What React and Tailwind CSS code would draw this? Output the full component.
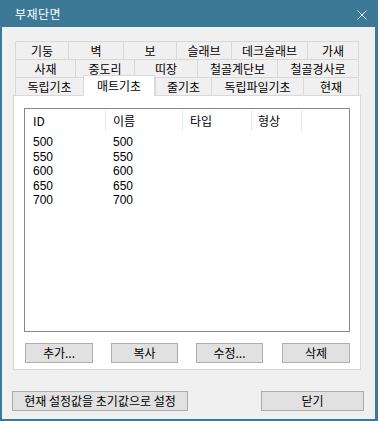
import React from "react";

const font = "font-['Noto_Sans_CJK_KR','Noto_Sans',sans-serif]";
const digitFont = "font-['Liberation_Sans','Noto_Sans_CJK_KR',sans-serif]";

const tabRows = [
  [
    ["기둥", 53],
    ["벽", 55],
    ["보", 53],
    ["슬래브", 55],
    ["데크슬래브", 76],
    ["가새", 52],
  ],
  [
    ["사재", 60],
    ["중도리", 59],
    ["띠장", 63],
    ["철골계단보", 80],
    ["철골경사로", 82],
  ],
  [
    ["독립기초", 68],
    ["매트기초", 72],
    ["줄기초", 56],
    ["독립파일기초", 92],
    ["현재", 56],
  ],
];

const columns = [
  ["ID", 81, "pl-[8px]"],
  ["이름", 77, "pl-[7px]"],
  ["타입", 69, "pl-[7px]"],
  ["형상", 50, "pl-[6px]"],
];

const rows = ["500", "550", "600", "650", "700"];

const Button = ({ label, className }) => (
  <button
    className={`h-[20px] bg-[#e1e1e1] border border-[#adadad] text-[12px] leading-none text-black flex items-center justify-center ${className}`}
  >
    {label}
  </button>
);

const App = () => {
  return (
    <div
      className={`w-[378px] h-[421px] bg-[#3b7997] flex flex-col pl-[2px] pr-[3px] pb-[2px] ${font}`}
    >
      {/* title bar */}
      <div className="h-[27px] flex items-center justify-between pl-[13px] pr-[8px]">
        <span className="text-[12px] leading-none text-white tracking-[0.5px]">
          부재단면
        </span>
        <svg width="10" height="10" viewBox="0 0 10 10" className="mt-[3px]">
          <path d="M0.5 0.5L9.5 9.5M9.5 0.5L0.5 9.5" stroke="#e4edf2" strokeWidth="1" />
        </svg>
      </div>

      <div className="flex-1 bg-[#f0f0f0] pt-[14px] pl-[11px]">
        {/* tabs */}
        <div className="pl-[2px] w-[348px]">
          {tabRows.map((row, ri) => (
            <div key={ri} className="flex items-end h-[18px]">
              {row.map(([label, w], ti) => {
                const selected = ri === 2 && ti === 1;
                const last = ti === row.length - 1;
                return (
                  <div
                    key={label}
                    style={{ width: w }}
                    className={
                      selected
                        ? "h-[21px] -mb-[1px] relative z-10 bg-white border-t border-x border-[#d9d9d9] flex items-center justify-center text-[12px] leading-none text-black"
                        : `h-[18px] bg-[#f0f0f0] border-t border-l border-[#d9d9d9] ${last ? "border-r" : ""} flex items-center justify-center text-[12px] leading-none text-black`
                    }
                  >
                    {label}
                  </div>
                );
              })}
            </div>
          ))}
        </div>

        {/* tab pane */}
        <div className="w-[348px] h-[275px] bg-white border border-[#d9d9d9] pt-[12px] px-[10px] flex flex-col">
          <div className="h-[224px] border border-[#828790] bg-white flex flex-col">
            <div className="h-[23px] flex">
              {columns.map(([label, w, pad]) => (
                <div key={label} style={{ width: w }} className="flex items-center">
                  <span className={`flex-1 text-[12px] leading-none text-black ${pad}`}>
                    {label}
                  </span>
                  <div className="w-px h-[21px] bg-[#e5e5e5]" />
                </div>
              ))}
            </div>
            <div className="pt-[3px]">
              {rows.map((v) => (
                <div key={v} className={`h-[14.5px] flex items-center ${digitFont}`}>
                  <span className="w-[81px] pl-[8px] text-[12px] leading-none text-black">
                    {v}
                  </span>
                  <span className="w-[77px] pl-[7px] text-[12px] leading-none text-black">
                    {v}
                  </span>
                </div>
              ))}
            </div>
          </div>

          <div className="flex mt-[11px] pl-[1px]">
            <Button label="추가..." className="w-[68px]" />
            <Button label="복사" className="w-[67px] ml-[18px]" />
            <Button label="수정..." className="w-[67px] ml-[18px]" />
            <Button label="삭제" className="w-[68px] ml-[19px]" />
          </div>
        </div>

        {/* bottom buttons */}
        <div className="flex justify-between mt-[21px] pr-[11px] -ml-[1px]">
          <Button label="현재 설정값을 초기값으로 설정" className="w-[176px] h-[19px]" />
          <Button label="닫기" className="w-[103px] h-[19px]" />
        </div>
      </div>
    </div>
  );
};

export default App;
